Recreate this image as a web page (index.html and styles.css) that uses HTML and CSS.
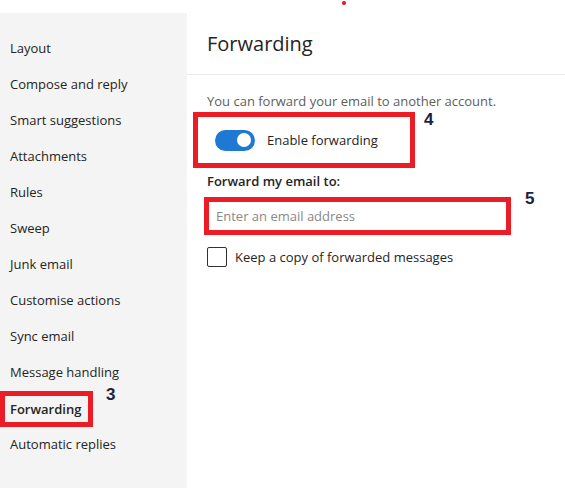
FILE: index.html
```html
<!DOCTYPE html>
<html lang="en">
<head>
<meta charset="utf-8">
<title>Forwarding</title>
<link rel="stylesheet" href="styles.css">
</head>
<body>
<div class="page">
  <div class="topbar"><span class="dot"></span></div>
  <div class="main">
    <nav class="sidebar">
      <div class="nav-item">Layout</div>
      <div class="nav-item">Compose and reply</div>
      <div class="nav-item">Smart suggestions</div>
      <div class="nav-item">Attachments</div>
      <div class="nav-item">Rules</div>
      <div class="nav-item">Sweep</div>
      <div class="nav-item">Junk email</div>
      <div class="nav-item">Customise actions</div>
      <div class="nav-item">Sync email</div>
      <div class="nav-item">Message handling</div>
      <div class="nav-item active">Forwarding<span class="badge badge-3">3</span></div>
      <div class="nav-item">Automatic replies</div>
    </nav>
    <section class="panel">
      <header class="panel-header"><h1 class="title">Forwarding</h1></header>
      <div class="content">
        <p class="desc">You can forward your email to another account.</p>
        <div class="toggle-box">
          <span class="toggle"><span class="knob"></span></span>
          <span class="toggle-label">Enable forwarding</span>
          <span class="badge badge-4">4</span>
        </div>
        <label class="field-label">Forward my email to:</label>
        <div class="input-box">
          <input class="email" type="text" placeholder="Enter an email address">
          <span class="badge badge-5">5</span>
        </div>
        <div class="check-row">
          <span class="checkbox"></span>
          <span class="check-label">Keep a copy of forwarded messages</span>
        </div>
      </div>
    </section>
  </div>
</div>
</body>
</html>
```
FILE: styles.css
```css
* { box-sizing: border-box; }
html, body { margin: 0; padding: 0; background: #fff; }
body {
  font-family: "Open Sans", "Noto Sans", sans-serif;
  font-size: 13px;
  color: #252423;
  width: 565px;
  height: 488px;
  overflow: hidden;
}
.page { display: flex; flex-direction: column; height: 488px; }
.topbar { height: 13px; position: relative; }
.dot {
  position: absolute; left: 342px; top: 1px;
  width: 4px; height: 4px; border-radius: 50%; background: #e81123;
}
.main { display: flex; flex: 1; }
.sidebar {
  width: 187px; background: #f4f4f4;
  padding-top: 17px;
  display: flex; flex-direction: column;
}
.nav-item {
  height: 36px; line-height: 36px; padding-left: 10px;
  color: #252423; white-space: nowrap; position: relative;
}
.nav-item.active {
  font-weight: 600;
  width: 93px; padding-left: 5px;
  border: 5px solid #ec1c24;
  line-height: 26px;
  margin-top: 1px; margin-bottom: -1px;
}
.badge {
  position: absolute;
  font-family: "Liberation Sans", Arial, sans-serif;
  font-weight: 700; font-size: 17px; color: #1b2340; line-height: 1;
}
.badge-3 { left: 101px; top: -10px; }
.badge-4 { left: 226px; top: -6px; }
.badge-5 { left: 316px; top: -12px; }
.panel { flex: 1; display: flex; flex-direction: column; }
.panel-header {
  height: 62px; border-bottom: 1px solid #ebebeb;
  padding-left: 20px; display: flex; align-items: center;
}
.title { margin: 0; font-size: 20px; font-weight: 400; color: #252423; padding-bottom: 1px; }
.content { padding-left: 6px; display: flex; flex-direction: column; align-items: flex-start; }
.desc { margin: 17px 0 0 14px; color: #605e5c; line-height: 18px; }
.toggle-box {
  position: relative;
  width: 222px; height: 56px; margin-top: 2px;
  border: 5px solid #ec1c24;
  display: flex; align-items: center; padding-left: 17px; gap: 12px;
}
.toggle {
  width: 40px; height: 21px; border-radius: 11px; background: #1f78d1;
  display: flex; align-items: center; justify-content: flex-end; padding-right: 4px;
}
.knob { width: 14px; height: 14px; border-radius: 50%; background: #fff; }
.toggle-label { color: #252423; }
.field-label { margin: 4px 0 0 14px; font-weight: 600; line-height: 18px; color: #252423; }
.input-box {
  position: relative;
  margin: 7px 0 0 11px;
  width: 307px; height: 38px; border: 5px solid #ec1c24;
  display: flex;
}
.email {
  flex: 1; border: none; outline: none; padding: 0 0 0 7px; margin: 0;
  font-family: inherit; font-size: 13px; color: #252423; background: #fff;
}
.email::placeholder { color: #8a8886; }
.check-row { display: flex; align-items: center; margin: 12px 0 0 14px; gap: 8px; }
.checkbox { width: 20px; height: 20px; border: 1px solid #323130; border-radius: 2px; background: #fff; }
.check-label { color: #252423; }
```
